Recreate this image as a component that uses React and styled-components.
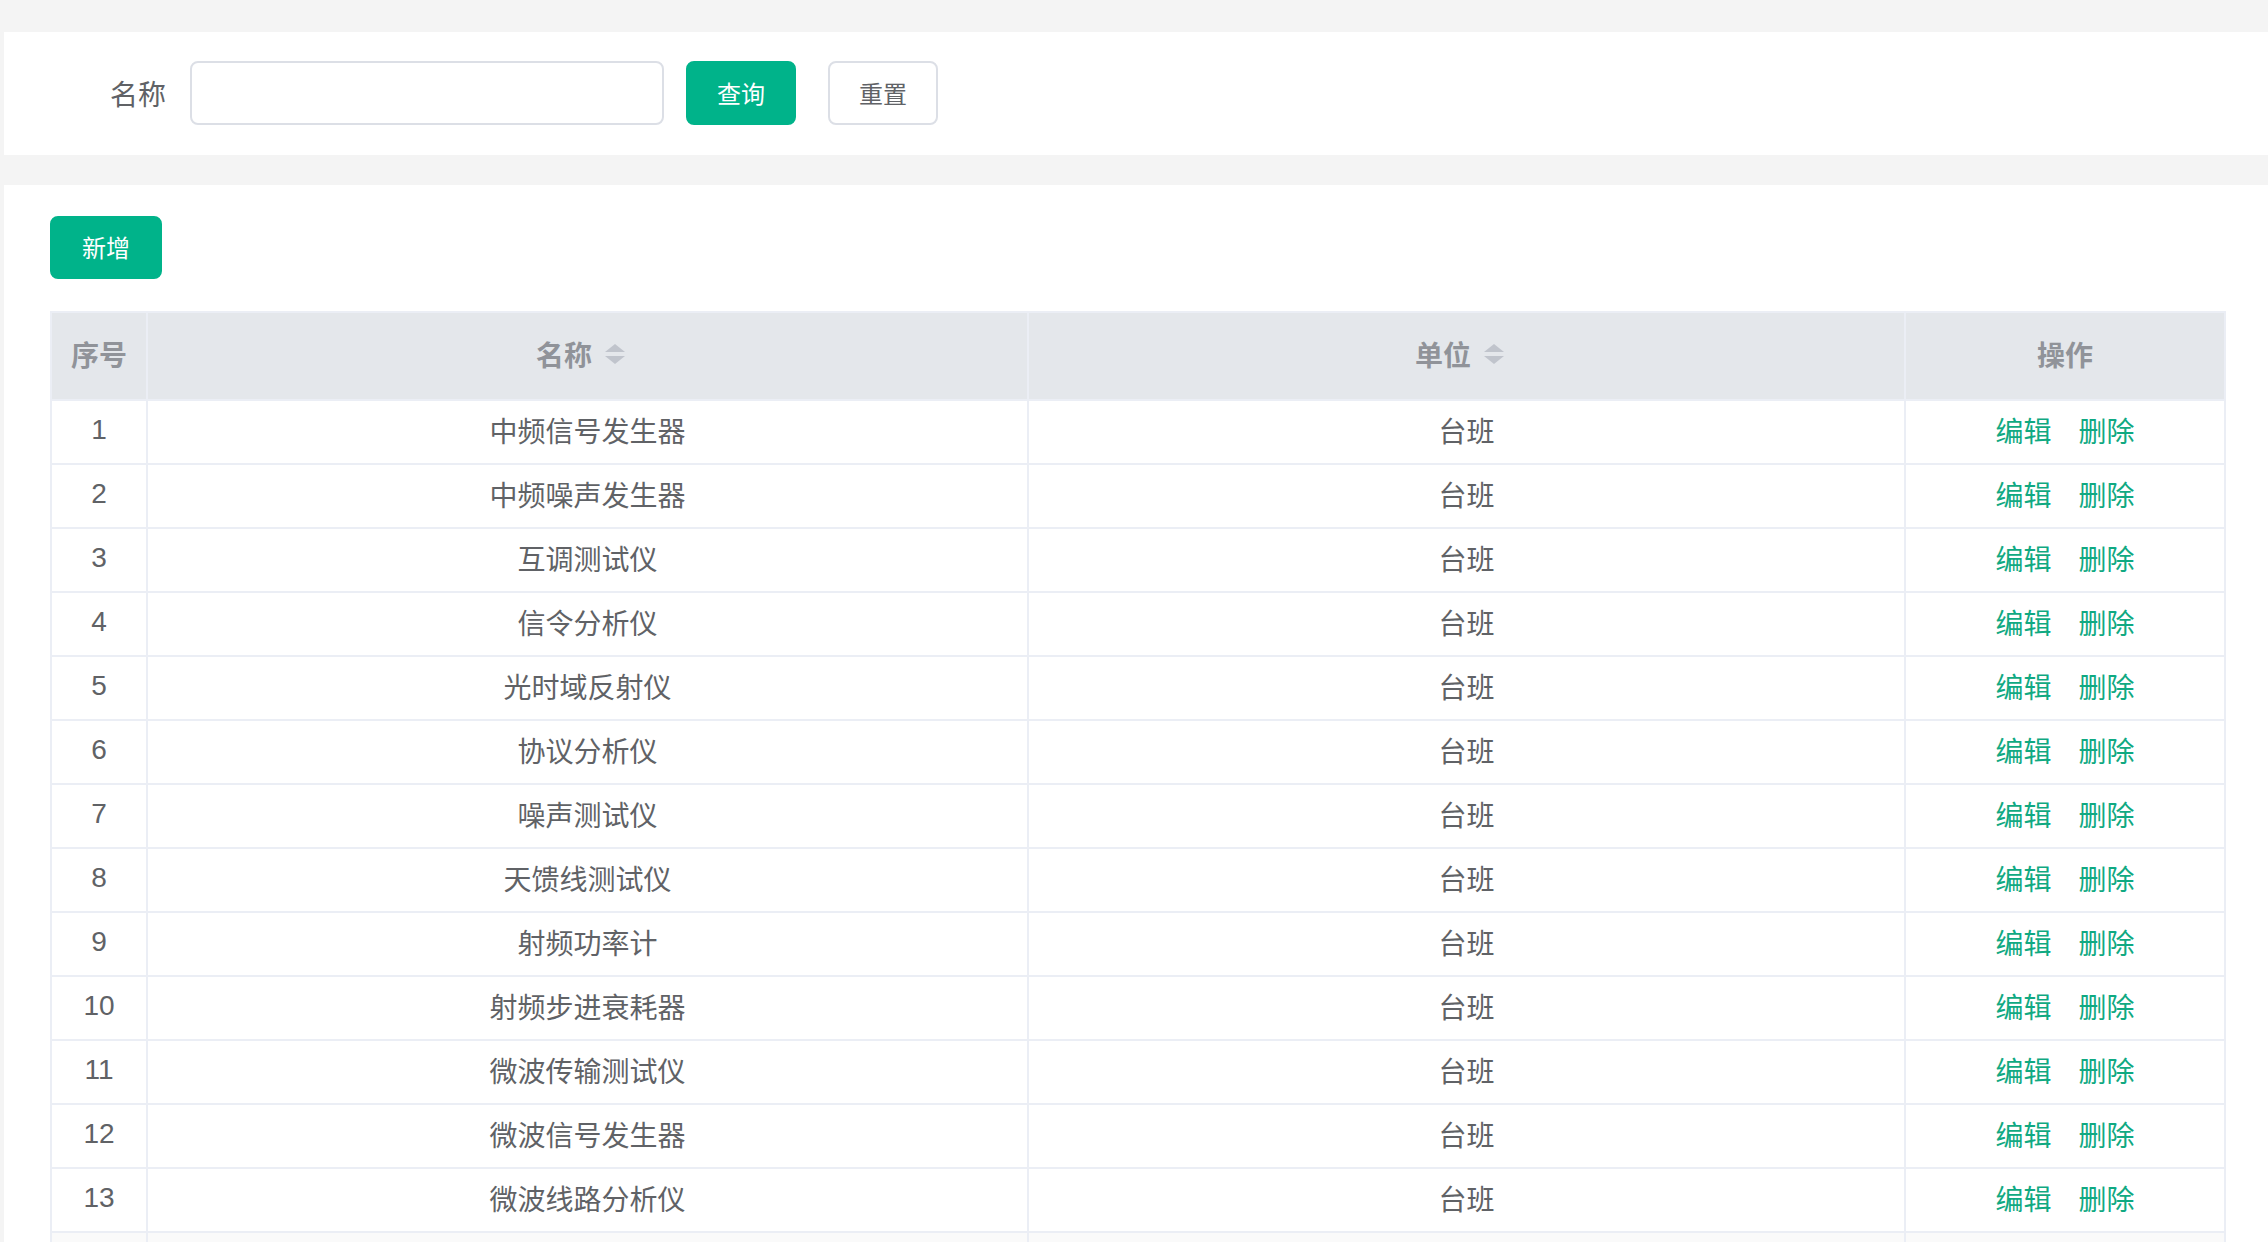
import React from 'react';
import styled, { createGlobalStyle } from 'styled-components';

const GlobalStyle = createGlobalStyle`
  html, body {
    margin: 0;
    padding: 0;
    background: #f4f4f4;
  }
  body {
    font-family: "Liberation Sans", "Noto Sans CJK SC", sans-serif;
    color: #606266;
  }
`;

const Page = styled.div`
  padding-top: 32px;
  display: flex;
  flex-direction: column;
  gap: 30px;
`;

const Panel = styled.section`
  margin-left: 4px;
  background: #fff;
`;

const SearchPanel = styled(Panel)`
  height: 123px;
  display: flex;
  align-items: center;
  padding-bottom: 1px;
  box-sizing: border-box;
`;

const Label = styled.label`
  width: 186px;
  padding-right: 24px;
  box-sizing: border-box;
  text-align: right;
  font-size: 28px;
  color: #606266;
`;

const Input = styled.input`
  width: 474px;
  height: 64px;
  box-sizing: border-box;
  border: 2px solid #dcdfe6;
  border-radius: 8px;
  outline: none;
  padding: 0 20px;
  font-size: 26px;
  margin-right: 22px;
`;

const Button = styled.button`
  height: ${p => p.$h || 64}px;
  width: ${p => p.$w || 110}px;
  padding: 0 0 2px;
  box-sizing: border-box;
  border-radius: 8px;
  font-family: "Liberation Sans", "Noto Sans CJK SC", sans-serif;
  font-size: 24px;
  cursor: pointer;
  border: 2px solid ${p => (p.$primary ? '#00b38a' : '#dcdfe6')};
  background: ${p => (p.$primary ? '#00b38a' : '#fff')};
  color: ${p => (p.$primary ? '#fff' : '#606266')};
  margin-right: ${p => p.$mr || 0}px;
`;

const ListPanel = styled(Panel)`
  padding: 31px 42px 0 46px;
  display: flex;
  flex-direction: column;
  gap: 32px;
`;

const Toolbar = styled.div`
  display: flex;
`;

const Table = styled.table`
  width: 2176px;
  table-layout: fixed;
  border-collapse: collapse;
  border: 2px solid #ebeef5;
  font-size: 28px;
`;

const Th = styled.th`
  height: 88px;
  padding: 0 0 4px;
  box-sizing: border-box;
  background: #e4e7eb;
  border: 2px solid #ebeef5;
  color: #909399;
  font-weight: 700;
  text-align: center;
`;

const HeadInner = styled.span`
  display: inline-flex;
  align-items: center;
  gap: 13px;
  padding-right: ${p => (p.$sortable ? 14 : 0)}px;
`;

const Caret = styled.span`
  display: inline-flex;
  flex-direction: column;
  gap: 4px;
  &::before,
  &::after {
    content: '';
    width: 0;
    height: 0;
    border-left: 10px solid transparent;
    border-right: 10px solid transparent;
  }
  &::before {
    border-bottom: 8px solid #c0c4cc;
  }
  &::after {
    border-top: 8px solid #c0c4cc;
  }
`;

const Tr = styled.tr`
  background: ${p => (p.$hover ? '#fafafa' : '#fff')};
`;

const Td = styled.td`
  height: 64px;
  padding: 0 0 4px;
  box-sizing: border-box;
  border: 2px solid #ebeef5;
  text-align: center;
  color: #606266;
`;

const Actions = styled.span`
  display: inline-flex;
  gap: 27px;
`;

const Link = styled.a`
  color: #10a982;
  cursor: pointer;
`;

const ROWS = [
  '中频信号发生器',
  '中频噪声发生器',
  '互调测试仪',
  '信令分析仪',
  '光时域反射仪',
  '协议分析仪',
  '噪声测试仪',
  '天馈线测试仪',
  '射频功率计',
  '射频步进衰耗器',
  '微波传输测试仪',
  '微波信号发生器',
  '微波线路分析仪',
];

export default function App() {
  return (
    <>
      <GlobalStyle />
      <Page>
        <SearchPanel>
          <Label>名称</Label>
          <Input />
          <Button $primary $mr={32}>查询</Button>
          <Button>重置</Button>
        </SearchPanel>
        <ListPanel>
          <Toolbar>
            <Button $primary $h={63} $w={112}>新增</Button>
          </Toolbar>
          <Table>
            <colgroup>
              <col style={{ width: 96 }} />
              <col style={{ width: 881 }} />
              <col style={{ width: 877 }} />
              <col />
            </colgroup>
            <thead>
              <tr>
                <Th>序号</Th>
                <Th>
                  <HeadInner $sortable>名称<Caret /></HeadInner>
                </Th>
                <Th>
                  <HeadInner $sortable>单位<Caret /></HeadInner>
                </Th>
                <Th>操作</Th>
              </tr>
            </thead>
            <tbody>
              {ROWS.map((name, i) => (
                <Tr key={name}>
                  <Td>{i + 1}</Td>
                  <Td>{name}</Td>
                  <Td>台班</Td>
                  <Td>
                    <Actions>
                      <Link>编辑</Link>
                      <Link>删除</Link>
                    </Actions>
                  </Td>
                </Tr>
              ))}
              <Tr $hover>
                <Td />
                <Td />
                <Td />
                <Td />
              </Tr>
            </tbody>
          </Table>
        </ListPanel>
      </Page>
    </>
  );
}
